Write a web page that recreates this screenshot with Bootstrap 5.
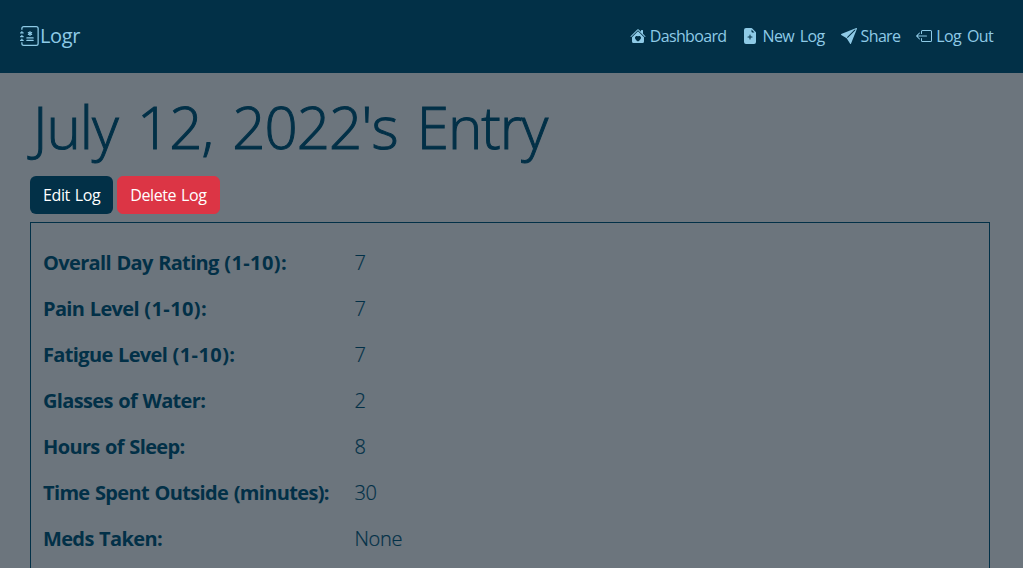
<!DOCTYPE html>
<html lang="en">
<head>
<meta charset="utf-8">
<meta name="viewport" content="width=device-width, initial-scale=1">
<title>Logr</title>
<link href="https://cdn.jsdelivr.net/npm/bootstrap@5.3.0/dist/css/bootstrap.min.css" rel="stylesheet">
<style>
  :root { --navy: #023047; --sky: #8ecae6; }
  body { font-family: "Open Sans", "Noto Sans", sans-serif; background: #6c757d; color: var(--navy); height: 100vh; overflow: hidden; }
  .topbar { background: var(--navy); height: 73px; padding: 0 29px 2px 20px; }
  .topbar a { color: var(--sky); text-decoration: none; white-space: nowrap; }
  .topbar svg { fill: currentColor; flex: none; }
  .topbar .navbar-brand { font-size: 20px; letter-spacing: -.4px; }
  .menu { gap: 16px; margin-right: 1px; }
  .menu a { gap: 4px; letter-spacing: -.65px; word-spacing: 2.4px; }
  .entry { height: calc(100vh - 73px); padding: 19px 33px 0 30px; overflow: hidden; }
  .entry h1 { font-size: 58.2px; font-weight: 300; -webkit-text-stroke: 1px var(--navy); line-height: 1.2; letter-spacing: -.95px; word-spacing: 5px; text-indent: 3px; margin-bottom: 14px; white-space: nowrap; }
  .entry .btn { letter-spacing: -.4px; word-spacing: 1.2px; }
  .btn-navy, .btn-navy:hover { background: var(--navy); color: #fff; }
  .details { border: 1px solid var(--navy); border-bottom: 0; padding: 25px 12px 0; height: 346px; overflow: hidden; }
  .details dl { display: grid; grid-template-columns: 312px 1fr; row-gap: 16px; font-size: 20px; line-height: 30px; }
  .details dt { font-weight: 700; letter-spacing: -.65px; word-spacing: .9px; white-space: nowrap; }
  .details dt span { letter-spacing: .4px; }
  .details dd { font-weight: 300; -webkit-text-stroke: .2px var(--navy); margin: 0 0 0 -.5px; letter-spacing: -.3px; }
</style>
</head>
<body>
<nav class="topbar d-flex align-items-center justify-content-between">
  <a class="navbar-brand d-flex align-items-center m-0 p-0" href="#">
    <svg width="20" height="20" viewBox="0 0 16 16"><path d="M8 4a.5.5 0 0 1 .5.5v.634l.549-.317a.5.5 0 1 1 .5.866L9 6l.549.317a.5.5 0 1 1-.5.866L8.5 6.866V7.5a.5.5 0 0 1-1 0v-.634l-.549.317a.5.5 0 1 1-.5-.866L7 6l-.549-.317a.5.5 0 0 1 .5-.866l.549.317V4.5A.5.5 0 0 1 8 4zM5 9.5a.5.5 0 0 1 .5-.5h5a.5.5 0 0 1 0 1h-5a.5.5 0 0 1-.5-.5zm0 2a.5.5 0 0 1 .5-.5h5a.5.5 0 0 1 0 1h-5a.5.5 0 0 1-.5-.5z"/><path d="M3 0h10a2 2 0 0 1 2 2v12a2 2 0 0 1-2 2H3a2 2 0 0 1-2-2v-1h1v1a1 1 0 0 0 1 1h10a1 1 0 0 0 1-1V2a1 1 0 0 0-1-1H3a1 1 0 0 0-1 1v1H1V2a2 2 0 0 1 2-2z"/><path d="M1 5v-.5a.5.5 0 0 1 1 0V5h.5a.5.5 0 0 1 0 1h-2a.5.5 0 0 1 0-1H1zm0 3v-.5a.5.5 0 0 1 1 0V8h.5a.5.5 0 0 1 0 1h-2a.5.5 0 0 1 0-1H1zm0 3v-.5a.5.5 0 0 1 1 0v.5h.5a.5.5 0 0 1 0 1h-2a.5.5 0 0 1 0-1H1z"/></svg><span>Logr</span>
  </a>
  <div class="menu d-flex">
    <a class="d-flex align-items-center" href="#"><svg width="16" height="16" viewBox="0 0 16 16"><path d="M7.293 1.5a1 1 0 0 1 1.414 0L11 3.793V2.5a.5.5 0 0 1 .5-.5h1a.5.5 0 0 1 .5.5v3.293l2.354 2.353a.5.5 0 0 1-.708.708L8 2.207 1.354 8.854a.5.5 0 1 1-.708-.708L7.293 1.5Z"/><path d="m14 9.293-6-6-6 6V13.5A1.5 1.5 0 0 0 3.5 15h9a1.5 1.5 0 0 0 1.5-1.5V9.293Zm-6-.811c1.664-1.673 5.825 1.254 0 5.018-5.825-3.764-1.664-6.691 0-5.018Z"/></svg><span>Dashboard</span></a>
    <a class="d-flex align-items-center" href="#"><svg width="16" height="16" viewBox="0 0 16 16"><path d="M9.293 0H4a2 2 0 0 0-2 2v12a2 2 0 0 0 2 2h8a2 2 0 0 0 2-2V4.707A1 1 0 0 0 13.707 4L10 .293A1 1 0 0 0 9.293 0zM9.5 3.5v-2l3 3h-2a1 1 0 0 1-1-1zM8.5 7v1.5H10a.5.5 0 0 1 0 1H8.5V11a.5.5 0 0 1-1 0V9.5H6a.5.5 0 0 1 0-1h1.5V7a.5.5 0 0 1 1 0z"/></svg><span>New Log</span></a>
    <a class="d-flex align-items-center" href="#"><svg width="16" height="16" viewBox="0 0 16 16"><path d="M15.964.686a.5.5 0 0 0-.65-.65L.767 5.855H.766l-.452.18a.5.5 0 0 0-.082.887l.41.26.001.002 4.995 3.178 3.178 4.995.002.002.26.41a.5.5 0 0 0 .886-.083l6-15Zm-1.833 1.89L6.637 10.07l-.215-.338a.5.5 0 0 0-.154-.154l-.338-.215 7.494-7.494 1.178-.471-.47 1.178Z"/></svg><span>Share</span></a>
    <a class="d-flex align-items-center" href="#"><svg width="16" height="16" viewBox="0 0 16 16"><path d="M6 12.5a.5.5 0 0 0 .5.5h8a.5.5 0 0 0 .5-.5v-9a.5.5 0 0 0-.5-.5h-8a.5.5 0 0 0-.5.5v2a.5.5 0 0 1-1 0v-2A1.5 1.5 0 0 1 6.5 2h8A1.5 1.5 0 0 1 16 3.5v9a1.5 1.5 0 0 1-1.5 1.5h-8A1.5 1.5 0 0 1 5 12.5v-2a.5.5 0 0 1 1 0v2z"/><path d="M.146 8.354a.5.5 0 0 1 0-.708l3-3a.5.5 0 1 1 .708.708L1.707 7.5H10.5a.5.5 0 0 1 0 1H1.707l2.147 2.146a.5.5 0 0 1-.708.708l-3-3z"/></svg><span>Log Out</span></a>
  </div>
</nav>
<main class="entry">
  <h1>July 12, 2022's Entry</h1>
  <div class="d-flex gap-1 mb-2">
    <button type="button" class="btn btn-navy">Edit Log</button>
    <button type="button" class="btn btn-danger">Delete Log</button>
  </div>
  <section class="details">
    <dl class="m-0">
      <dt>Overall Day Rating <span>(1-10):</span></dt><dd>7</dd>
      <dt>Pain Level <span>(1-10):</span></dt><dd>7</dd>
      <dt>Fatigue Level <span>(1-10):</span></dt><dd>7</dd>
      <dt>Glasses of Water:</dt><dd>2</dd>
      <dt>Hours of Sleep:</dt><dd>8</dd>
      <dt>Time Spent Outside (minutes):</dt><dd>30</dd>
      <dt>Meds Taken:</dt><dd>None</dd>
    </dl>
  </section>
</main>
<script src="https://cdn.jsdelivr.net/npm/bootstrap@5.3.0/dist/js/bootstrap.bundle.min.js"></script>
</body>
</html>
